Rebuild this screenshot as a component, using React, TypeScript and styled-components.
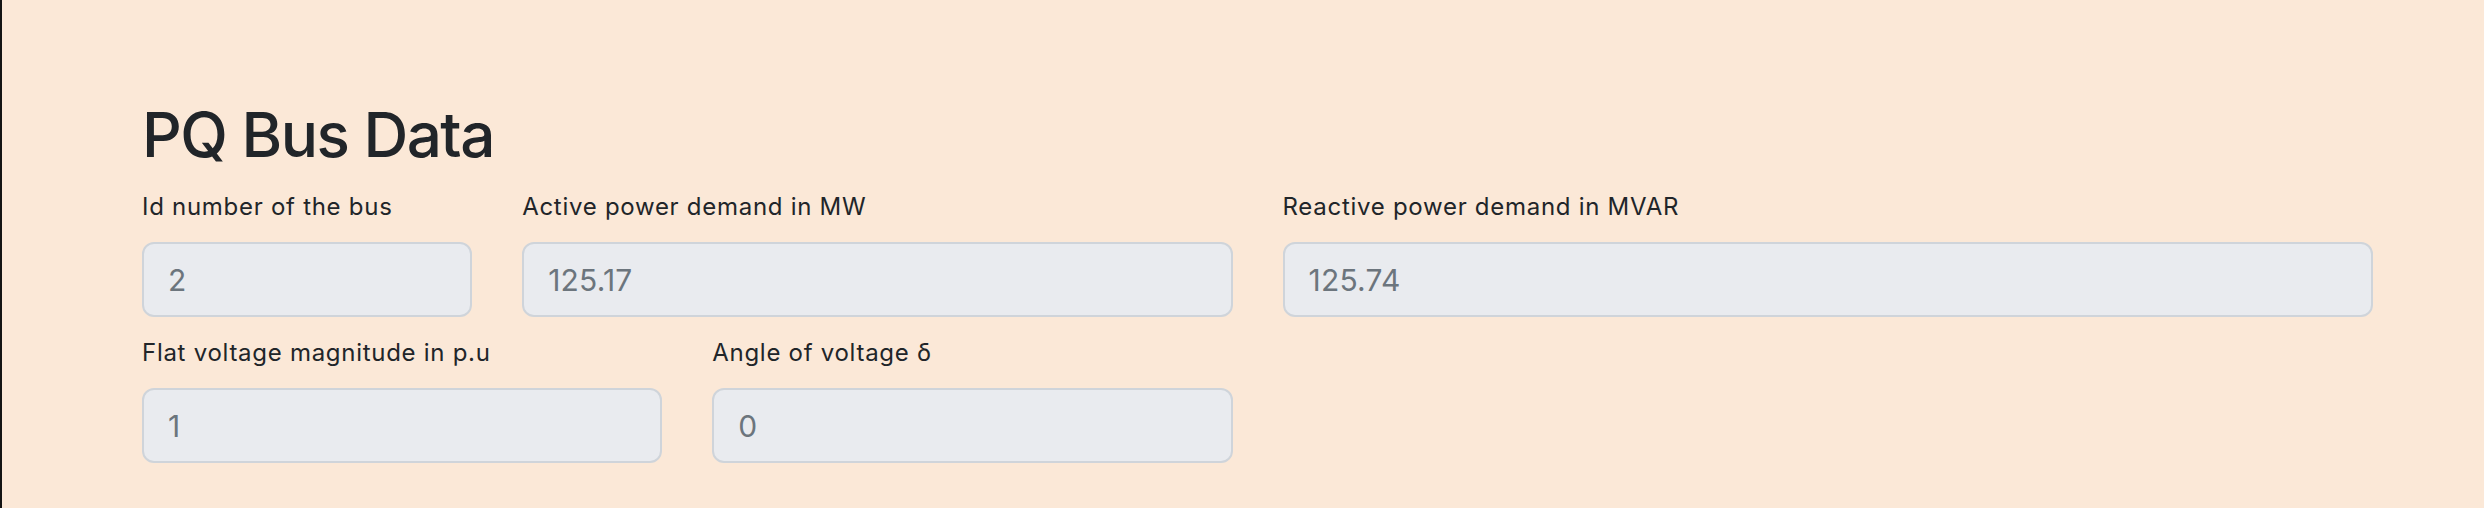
import React from "react";
import styled, { createGlobalStyle } from "styled-components";

const GlobalStyle = createGlobalStyle`
  html, body {
    margin: 0;
    padding: 0;
    background: #fbe8d7;
  }
  * { box-sizing: border-box; }
`;

const Page = styled.main`
  min-height: 100vh;
  border-left: 2px solid #141414;
  padding: 98px 0 0 140px;
  font-family: Inter, "Noto Sans", "Liberation Sans", sans-serif;
  color: #212529;
`;

const Title = styled.h1`
  margin: 0 0 17px;
  font-size: 62px;
  font-weight: 500;
  line-height: 1.2;
  letter-spacing: -1.5px;
  color: #212529;
`;

const FormGrid = styled.form`
  display: grid;
  width: 2231px;
  grid-template-columns: repeat(12, 1fr);
  column-gap: 50px;
  row-gap: 18px;
`;

const Field = styled.div<{ $span: number }>`
  grid-column: span ${(p) => p.$span};
  display: flex;
  flex-direction: column;
  min-width: 0;
`;

const Label = styled.label`
  display: block;
  margin-bottom: 17px;
  font-size: 24px;
  line-height: 36px;
  font-weight: 400;
  letter-spacing: 0.72px;
  color: #212529;
`;

const Input = styled.input`
  width: 100%;
  height: 75px;
  padding: 0 24px;
  border: 2px solid #cfd4da;
  border-radius: 12px;
  background: #e9ebef;
  font-family: inherit;
  font-size: 30px;
  letter-spacing: 0.2px;
  color: #6c757d;
  outline: none;
`;

const fields = [
  { id: "bus-id", label: "Id number of the bus", value: "2", span: 2 },
  { id: "p-demand", label: "Active power demand in MW", value: "125.17", span: 4 },
  { id: "q-demand", label: "Reactive power demand in MVAR", value: "125.74", span: 6 },
  { id: "v-mag", label: "Flat voltage magnitude in p.u", value: "1", span: 3 },
  { id: "v-angle", label: "Angle of voltage δ", value: "0", span: 3 },
];

export default function App() {
  return (
    <>
      <GlobalStyle />
      <Page>
        <Title>PQ Bus Data</Title>
        <FormGrid onSubmit={(e) => e.preventDefault()}>
          {fields.map((f) => (
            <Field key={f.id} $span={f.span}>
              <Label htmlFor={f.id}>{f.label}</Label>
              <Input id={f.id} value={f.value} readOnly />
            </Field>
          ))}
        </FormGrid>
      </Page>
    </>
  );
}
